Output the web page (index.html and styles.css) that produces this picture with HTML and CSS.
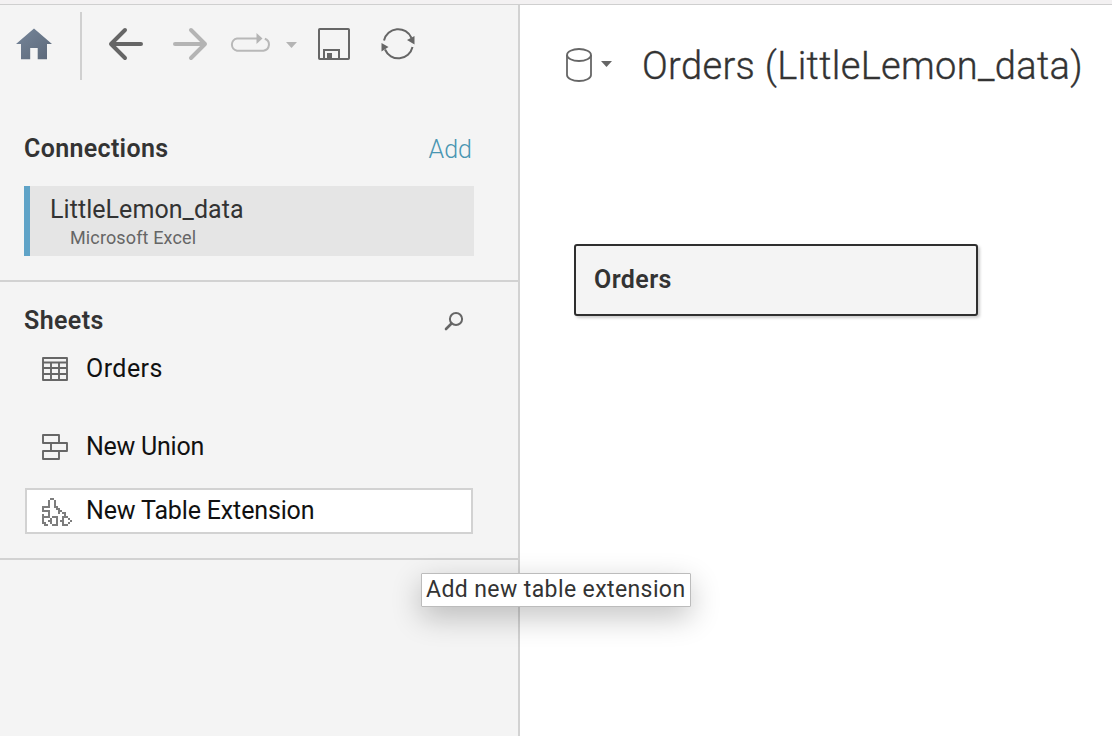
FILE: index.html
```html
<!DOCTYPE html>
<html lang="en">
<head>
<meta charset="utf-8">
<title>Orders (LittleLemon_data)</title>
<link rel="stylesheet" href="styles.css">
</head>
<body>
<div class="strip"></div>
<div class="app">
  <aside class="sidebar">
    <nav class="toolbar">
      <svg class="ic-home" width="36" height="32" viewBox="0 0 36 32"><defs><linearGradient id="h" x1="0" y1="0" x2="1" y2="1"><stop offset="0" stop-color="#76869a"/><stop offset="1" stop-color="#5c6879"/></linearGradient></defs><path fill="url(#h)" d="M18 .5 36 16h-5v15.200h-9.300V20h-7.500v11.200H5V16H0z"/></svg>
      <span class="divider"></span>
      <svg class="ic-back" width="36" height="34" viewBox="0 0 36 34"><path d="M33 17H3M17 3 3 17l14 14" fill="none" stroke="#666" stroke-width="4" stroke-linecap="round" stroke-linejoin="round"/></svg>
      <svg class="ic-forward" width="36" height="34" viewBox="0 0 36 34"><path d="M3 17h30M19 3l14 14-14 14" fill="none" stroke="#b4b4b4" stroke-width="4" stroke-linecap="round" stroke-linejoin="round"/></svg>
      <svg class="ic-redo" width="42" height="20" viewBox="0 0 42 20"><path d="M28 5.500H8a6.200 6.200 0 0 0 0 12.200h26.500a6.200 6.200 0 0 0 1.300-12" fill="none" stroke="#b8b8b8" stroke-width="2"/><path d="M27.500 0 33.500 5.500 27.500 11z" fill="#b4b4b4"/></svg>
      <svg class="ic-caret" width="11" height="6" viewBox="0 0 11 6"><path d="M0 0h11L5.500 6z" fill="#b4b4b4"/></svg>
      <svg class="ic-save" width="32" height="32" viewBox="0 0 32 32"><rect x="1" y="1" width="30" height="30" rx=".8" fill="none" stroke="#666" stroke-width="2"/><path d="M6 31v-9h15v9" fill="none" stroke="#666" stroke-width="2"/><path d="M9 25h5v6H9z" fill="#666"/></svg>
      <svg class="ic-refresh" width="34" height="32" viewBox="0 0 34 32"><path d="M3 12.500a14.500 14.500 0 0 1 27.500-2.500M31.500 19A14.500 14.500 0 0 1 4 21.500" fill="none" stroke="#666" stroke-width="2"/><path d="M33.500 8v8.500L26 12zM.5 15v8.500L7.500 19z" fill="#666"/></svg>
    </nav>
    <section class="connections">
      <header class="head"><h2 class="t-connections">Connections</h2><a class="add">Add</a></header>
      <div class="connection"><div class="name">LittleLemon_data</div><div class="kind">Microsoft Excel</div></div>
    </section>
    <section class="sheets">
      <header class="head"><h2 class="t-sheets">Sheets</h2>
        <svg class="ic-search" width="20" height="20" viewBox="0 0 20 20"><circle cx="12" cy="8" r="6.100" fill="none" stroke="#666" stroke-width="2"/><path d="M7.500 12.500 2 18" stroke="#666" stroke-width="2.600" stroke-linecap="round"/></svg>
      </header>
      <div class="item orders"><svg width="30" height="26" viewBox="0 0 30 26"><path d="M1 2h24v22H1zM1 6.500h24M1 12h24M1 18h24M9 6.500V24M17 6.500V24" fill="none" stroke="#666" stroke-width="1.900" stroke-linejoin="round"/></svg><span class="t-orders">Orders</span></div>
      <div class="item union"><svg width="30" height="26" viewBox="0 0 30 26"><path d="M1 1h16v8H1zM9 9h16v8H9zM1 17h16v8H1z" fill="none" stroke="#666" stroke-width="1.900" stroke-linejoin="round"/></svg><span class="t-union">New Union</span></div>
      <div class="item extension"><svg width="30" height="28" viewBox="0 0 15 14" fill="none" stroke="#7d7d7d" stroke-width="1"><path d="M4 .5h2M3 1.500h1M6 1.500h1M3 2.500h1M6 2.500h1M3 3.500h1M6 3.500h1M0 4.500h4M6 4.500h2M0 5.500h1M7 5.500h2M0 6.500h4M8 6.500h2M3 7.500h1M8 7.500h1M10 7.500h2M0 8.500h1M3 8.500h1M11 8.500h1M0 9.500h4M5 9.500h3M10 9.500h3M0 10.500h1M4 10.500h1M7 10.500h1M10 10.500h1M13 10.500h1M0 11.500h1M3 11.500h2M7 11.500h1M9 11.500h2M14 11.500h1M0 12.500h2M4 12.500h1M7 12.500h1M10 12.500h1M13 12.500h1M1 13.500h2M5 13.500h3M10 13.500h3"/></svg><span class="t-extension">New Table Extension</span></div>
    </section>
  </aside>
  <main class="canvas">
    <header class="title">
      <svg class="ic-db" width="26" height="34" viewBox="0 0 26 34"><ellipse cx="13" cy="7" rx="12" ry="6" fill="none" stroke="#666" stroke-width="1.800"/><path d="M1 7v20c0 3.300 5.400 6 12 6s12-2.700 12-6V7" fill="none" stroke="#666" stroke-width="1.800"/></svg>
      <svg class="ic-dbcaret" width="11" height="6" viewBox="0 0 11 6"><path d="M0 0h11L5.500 6z" fill="#666"/></svg>
      <h1>Orders (LittleLemon_data)</h1>
    </header>
    <div class="table-node"><span>Orders</span></div>
  </main>
</div>
<div class="tooltip"><span>Add new table extension</span></div>
</body>
</html>
```
FILE: styles.css
```css
* { box-sizing: border-box; }
body { margin: 0; width: 1112px; height: 736px; overflow: hidden; display: flex; flex-direction: column; font-family: Roboto, "Liberation Sans", sans-serif; color: #333; background: #fff; }
h1, h2 { margin: 0; }
svg { display: block; flex: none; }
span, h1, h2, .name, .kind, .add { white-space: nowrap; }
.strip { height: 5px; flex: none; background: #f3f1f2; border-bottom: 1px solid #cfcfcf; }
.app { flex: 1; display: flex; }
.sidebar { width: 520px; background: #f4f4f4; border-right: 2px solid #d2d2d2; }
.toolbar { height: 78px; display: flex; align-items: center; padding-left: 16px; }
.divider { width: 2px; height: 68px; margin: 4px 26px 0 28px; background: #d0d0d0; }
.ic-forward { margin-left: 28px; }
.ic-redo { margin: -3px 0 0 21px; }
.ic-caret { margin: 2px 21px 0 15px; }
.ic-refresh { margin-left: 31px; }
.connections { height: 199px; padding: 48px 44px 0 24px; border-bottom: 2px solid #d2d2d2; }
.head { display: flex; justify-content: space-between; align-items: center; height: 36px; }
.head h2 { font-size: 25px; line-height: 36px; font-weight: 600; }
.t-connections { letter-spacing: .33px; }
.t-sheets { letter-spacing: .4px; }
.add { font-size: 25px; color: #4996b2; margin-right: 2px; font-weight: 350; }
.connection { height: 70px; margin-top: 19px; background: #e5e5e5; border-left: 6px solid #5fa3c7; padding: 9px 0 0 20px; }
.name { font-size: 25px; line-height: 30px; letter-spacing: .06px; }
.kind { font-size: 18px; line-height: 25px; padding-left: 20px; color: #666; letter-spacing: .13px; }
.sheets { height: 278px; padding: 21px 45px 0 24px; border-bottom: 2px solid #d2d2d2; }
.ic-search { margin-right: 9px; }
.item { height: 46px; display: flex; align-items: center; gap: 15px; padding-left: 15px; font-size: 25px; color: #111; border: 2px solid transparent; width: 448px; margin-left: 1px; }
.item span { position: relative; top: -1px; left: -1px; }
.item svg { margin-top: -1px; }
.orders { margin-top: 7px; }
.union { margin-top: 32px; }
.extension { margin-top: 18px; border-color: #d2d2d2; background: #fff; }
.item.extension svg { margin-top: 2px; }
.t-orders { letter-spacing: .45px; }
.t-union { letter-spacing: -.25px; }
.t-extension { letter-spacing: -.15px; }
.canvas { flex: 1; padding: 0; }
.title { display: flex; align-items: center; padding-left: 46px; height: 119px; }
.ic-dbcaret { margin: -2px 30px 0 9px; }
h1 { font-size: 38px; font-weight: 300; line-height: 50px; letter-spacing: .36px; -webkit-text-stroke: .35px #333; padding-top: 2px; }
.table-node { width: 404px; height: 72px; margin: 120px 0 0 54px; border: 2px solid #2f2f2f; border-radius: 3px; background: #f4f4f4; box-shadow: 2px 2px 3px rgba(0,0,0,.2); font-size: 25px; font-weight: 600; letter-spacing: .4px; padding: 0 0 2px 18px; display: flex; align-items: center; }
.tooltip { position: absolute; left: 421px; top: 573px; width: 270px; height: 34px; display: flex; align-items: center; padding: 0 0 1px 4px; background: #fff; border: 1px solid #bcbcbc; border-radius: 1px; font-size: 23px; letter-spacing: .4px; box-shadow: 0 10px 30px rgba(0,0,0,.24); }
```
